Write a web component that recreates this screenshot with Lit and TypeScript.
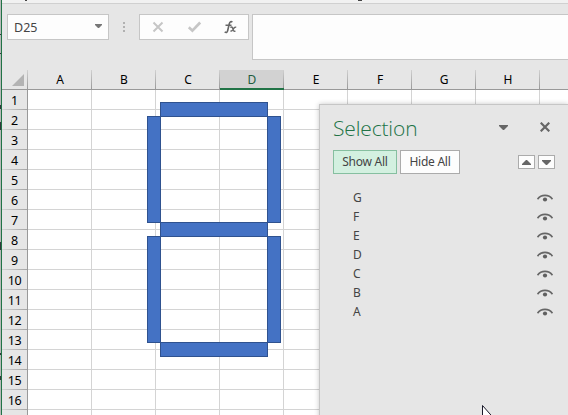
import { LitElement, html, css, svg } from "lit";
import { customElement } from "lit/decorators.js";
import { classMap } from "lit/directives/class-map.js";

const COLUMNS = ["A", "B", "C", "D", "E", "F", "G", "H", ""];
const ROWS = [...Array.from({ length: 16 }, (_, i) => String(i + 1)), ""];
const SHAPES = ["G", "F", "E", "D", "C", "B", "A"];
const SEGMENTS = [
  [147, 116, 14, 107], [267, 116, 14, 107],
  [147, 236, 14, 107], [267, 236, 14, 107],
  [160, 102, 108, 15], [160, 222, 108, 15], [160, 342, 108, 15],
];

@customElement("formula-bar")
class FormulaBar extends LitElement {
  static styles = css`
    :host { display: flex; height: 56px; padding-top: 10px; padding-left: 5px; box-sizing: border-box; align-items: flex-start; }
    .box { box-sizing: border-box; background: #fdfdfd; border: 1px solid #c6c6c6; height: 26px; display: flex; align-items: center; }
    .name { width: 102px; padding: 0 6px 0 6px; justify-content: space-between; color: #444; font-size: 12.5px; }
    .name svg { margin-top: -2px; }
    .dots { width: 30px; height: 26px; }
    .tools { width: 110px; }
    .input { flex: 1; height: 46px; margin-left: 3px; border-right: 0; }
    svg { display: block; }
  `;
  render() {
    return html`
      <div class="box name"><span>D25</span>
        <svg width="7" height="4"><path d="M0 0h7v1l-3 3h-1l-3-3z" fill="#777" /></svg>
      </div>
      <svg class="dots" viewBox="0 0 30 26"><path d="M14 8h2v2h-2zM14 12h2v2h-2zM14 16h2v2h-2z" fill="#b1b1b1" /></svg>
      <div class="box tools">
        <svg width="108" height="24" viewBox="0 0 108 24">
          <path d="M13.5 7.5l9 9M22.5 7.5l-9 9" stroke="#c6c6c6" stroke-width="2" fill="none" />
          <path d="M48.8 12.3l3.6 3.4 7.8-8.2" stroke="#c6c6c6" stroke-width="2.7" fill="none" />
          <path d="M92.3 7.3c-1-1.3-2.5-.8-3 1.4l-1.6 6.8c-.5 2.2-1.7 2.4-3 1.4M85.5 10.3h6" stroke="#666" stroke-width="1.6" fill="none" />
          <path d="M90.3 12.3q1.7-.7 2.3.7l.9 2.6q.5 1.2 2 .4M96.2 12.2q-1.4-.2-2.4 1.1l-1.3 1.8q-.9 1.2-2.1.8" stroke="#666" stroke-width="1.4" fill="none" />
        </svg>
      </div>
      <div class="box input"></div>`;
  }
}

@customElement("sheet-grid")
class SheetGrid extends LitElement {
  static styles = css`
    :host { display: block; width: 566px; overflow: hidden; color: #000; }
    .heads, .row { display: grid; grid-template-columns: 26px repeat(9, 64px); grid-template-rows: 20px; height: 20px; }
    .head, .corner, .num, .cell { box-sizing: border-box; border-bottom: 1px solid #999; }
    .head { font-size: 12px; line-height: 19px; text-align: center; position: relative; }
    .head::after, .corner::after { content: ""; position: absolute; right: 0; top: 0; width: 1px; height: 19px; background: linear-gradient(#d0d0d0, #999); }
    .on { background: #d2d2d2; border-bottom: 2px solid #217346; color: #215c3c; }
    .on::after { height: 18px; }
    .corner { position: relative; }
    .corner svg { display: block; margin: 4px 0 0 10px; }
    .num { font-size: 12.5px; line-height: 22px; letter-spacing: -0.3px; text-align: center; border-bottom: 0; border-right: 1px solid #999; background: linear-gradient(90deg, #d2d2d2, #a5a5a5) bottom / 100% 1px no-repeat; }
    .cell { background: #fff; border-right: 1px solid #d4d4d4; border-bottom: 1px solid #d4d4d4; }
  `;
  render() {
    return html`
      <div class="heads">
        <div class="corner"><svg width="12" height="12"><path d="M12 0v12h-12z" fill="#b3b3b3" /></svg></div>
        ${COLUMNS.map((c) => html`<div class=${classMap({ head: true, on: c === "D" })}>${c}</div>`)}
      </div>
      ${ROWS.map((n) => html`<div class="row"><div class="num">${n}</div>${COLUMNS.map(() => html`<div class="cell"></div>`)}</div>`)}`;
  }
}

@customElement("selection-pane")
class SelectionPane extends LitElement {
  static styles = css`
    :host { display: block; box-sizing: border-box; background: #e6e6e6; border-left: 1px solid #c6c6c6; border-top: 1px solid #c6c6c6; box-shadow: 0 0 5px rgba(0, 0, 0, 0.22); color: #444; font-size: 12px; }
    svg { display: block; }
    .title { display: flex; align-items: center; height: 45px; padding-left: 13px; }
    .name { font: 300 21px/30px "Open Sans", "Noto Sans", sans-serif; letter-spacing: -0.15px; color: #217346; width: 166px; margin-top: 1px; }
    .close { margin-left: 32px; margin-top: -1px; }
    .bar { display: flex; align-items: flex-start; padding-left: 13px; }
    .btn { box-sizing: border-box; height: 24px; border: 1px solid #ababab; background: #fdfdfd; line-height: 22px; text-align: center; letter-spacing: -0.25px; white-space: nowrap; }
    .show { width: 64px; margin-right: 3px; background: #d3f0e0; border-color: #86bfa0; }
    .hide { width: 60px; margin-right: 58px; }
    .step { box-sizing: border-box; width: 17px; height: 14px; border: 1px solid #ababab; background: #fdfdfd; margin: 5px 3px 0 0; display: flex; align-items: center; justify-content: center; }
    .list { padding-top: 14px; }
    .item { height: 19px; display: flex; align-items: center; justify-content: space-between; padding: 0 15px 0 33px; font-size: 12px; line-height: 19px; }
  `;
  render() {
    return html`
      <div class="title">
        <div class="name">Selection</div>
        <svg width="9" height="5"><path d="M0 0h9v1l-4 4h-1l-4-4z" fill="#666" /></svg>
        <svg class="close" width="10" height="10"><path d="M.7 .7l8.6 8.6M9.3 .7l-8.6 8.6" stroke="#666" stroke-width="2.2" /></svg>
      </div>
      <div class="bar">
        <div class="btn show">Show All</div><div class="btn hide">Hide All</div>
        <div class="step"><svg width="9" height="5"><path d="M4 0h1l4 4v1h-9v-1z" fill="#666" /></svg></div>
        <div class="step"><svg width="9" height="5"><path d="M0 0h9v1l-4 4h-1l-4-4z" fill="#666" /></svg></div>
      </div>
      <div class="list">
        ${SHAPES.map((s) => html`<div class="item"><span>${s}</span>
          <svg width="16" height="8" viewBox="0 0 16 8"><path d="M.5 5.2C4 .1 12 .1 15.5 5.2" fill="none" stroke="#666" stroke-width="1.6" /><circle cx="8" cy="5.5" r="2.1" fill="#606060" /></svg></div>`)}
      </div>`;
  }
}

@customElement("app-root")
class AppRoot extends LitElement {
  static styles = css`
    :host { display: block; position: relative; width: 568px; height: 415px; overflow: hidden; background: #e6e6e6; font-family: "Noto Sans", "Open Sans", sans-serif; }
    .frame { display: flex; height: 415px; }
    .edge { width: 1px; background: #b8bab9; border-right: 1px solid #217346; }
    .main { flex: 1; min-width: 0; }
    .ribbon { height: 3px; background: #f1f1f1; border-bottom: 1px solid #d0d0d0; }
    .gap { height: 10px; }
    .over { position: absolute; left: 0; top: 0; display: block; }
    .pane { position: absolute; left: 319px; top: 104px; width: 249px; height: 320px; }
  `;
  render() {
    return html`
      <div class="frame">
        <div class="edge"></div>
        <div class="main">
          <div class="ribbon"></div>
          <formula-bar></formula-bar>
          <div class="gap"></div>
          <sheet-grid></sheet-grid>
        </div>
      </div>
      <svg class="over" width="568" height="415">
        ${SEGMENTS.map(([x, y, w, h]) => svg`<rect x=${x + 0.5} y=${y + 0.5} width=${w - 1} height=${h - 1} fill="#4472c4" stroke="#2f528f" />`)}
        <path d="M25 0h2v1h-2zM358 0h4v1h-4z" fill="#444" />
        <path d="M0 34h1v1h-1zM0 53h1v1h-1zM0 105h1v4h-1zM0 122h1v8h-1zM0 242h1v8h-1zM0 353h1v2h-1zM0 376h1v4h-1z" fill="#33383c" />
      </svg>
      <selection-pane class="pane"></selection-pane>
      <svg class="over" width="568" height="415"><path d="M482.5 405.5v17l4-4h7.5z" fill="#fff" stroke="#1b1b2b" /></svg>`;
  }
}
